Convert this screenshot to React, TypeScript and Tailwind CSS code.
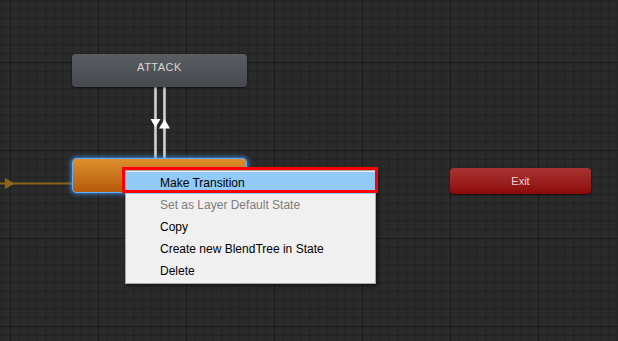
import React from "react";

function Grid() {
  return (
    <svg className="absolute inset-0" width="618" height="341">
      <defs>
        <pattern id="minor" width="8.8" height="8.8" x="1.2" y="0.4" patternUnits="userSpaceOnUse">
          <path d="M0.5 0 V8.8 M0 0.5 H8.8" stroke="#222222" strokeWidth="1" fill="none" />
        </pattern>
        <pattern id="major" width="88" height="88" x="10" y="62" patternUnits="userSpaceOnUse">
          <path d="M0.5 0 V88 M0 0.5 H88" stroke="#191919" strokeWidth="1" fill="none" />
        </pattern>
      </defs>
      <rect width="618" height="341" fill="#2a2a2a" />
      <rect width="618" height="341" fill="url(#minor)" />
      <rect width="618" height="341" fill="url(#major)" />
    </svg>
  );
}

function Connections() {
  return (
    <svg className="absolute inset-0" width="618" height="341">
      <line x1="0" y1="183.5" x2="72" y2="183.5" stroke="#8a6418" strokeWidth="2" />
      <polygon points="5,178 15,183.5 5,189" fill="#8a6418" />
      <rect x="154" y="87" width="3" height="71" fill="#a9a9a9" />
      <rect x="154.8" y="87" width="1.2" height="71" fill="#d4d4d4" />
      <rect x="163" y="87" width="3" height="71" fill="#a9a9a9" />
      <rect x="163.8" y="87" width="1.2" height="71" fill="#d4d4d4" />
      <polygon points="150.5,119 160.5,119 155.5,127.5" fill="#ffffff" />
      <polygon points="159,128.5 170,128.5 164.5,119" fill="#ffffff" />
    </svg>
  );
}

export default function App() {
  const font = { fontFamily: '"Liberation Sans", Arial, sans-serif' };
  return (
    <div className="relative w-[618px] h-[341px] overflow-hidden bg-[#2a2a2a]" style={font}>
      <Grid />
      <Connections />

      <div className="absolute left-[72px] top-[54px] w-[175px] h-[33px] rounded-[4px] bg-gradient-to-b from-[#5a5d61] to-[#46494d] shadow-[0_1px_2px_rgba(0,0,0,0.6)] flex items-start justify-center pt-[6px]">
        <span className="text-[11px] leading-[14px] tracking-[0.5px] text-[#d6d6d6]">ATTACK</span>
      </div>

      <div className="absolute left-[72px] top-[158px] w-[175px] h-[35px] rounded-[4px] bg-gradient-to-b from-[#dc8f2c] to-[#b65a08] border border-[#5eb0ff] shadow-[0_0_4px_1px_rgba(70,150,255,0.8)]" />

      <div className="absolute left-[450px] top-[168px] w-[141px] h-[26px] rounded-[4px] bg-gradient-to-b from-[#a83232] to-[#8c0606] shadow-[0_1px_2px_rgba(0,0,0,0.6)] flex items-center justify-center">
        <span className="text-[11px] text-[#e6d6d6]">Exit</span>
      </div>

      <div className="absolute left-[125px] top-[170px] w-[251px] h-[114px] bg-[#f0f0f0] border border-[#a8a8a8] shadow-[2px_2px_3px_rgba(0,0,0,0.5)] flex flex-col pt-[1px] text-[12px] text-black">
        <div className="h-[22px] flex items-center pl-[34px] bg-[#91c9f7]">Make Transition</div>
        <div className="h-[22px] flex items-center pl-[34px] text-[#7d7d7d]">Set as Layer Default State</div>
        <div className="h-[22px] flex items-center pl-[34px]">Copy</div>
        <div className="h-[22px] flex items-center pl-[34px]">Create new BlendTree in State</div>
        <div className="h-[22px] flex items-center pl-[34px]">Delete</div>
      </div>

      <div className="absolute left-[122px] top-[167px] w-[256px] h-[26px] border-[3px] border-[#ff0000]" />
    </div>
  );
}
